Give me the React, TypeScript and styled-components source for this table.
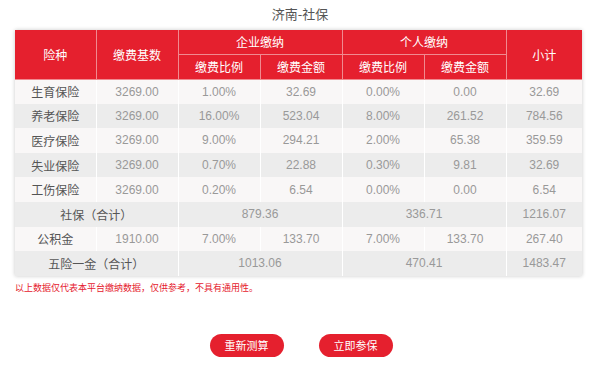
import React from 'react';
import styled, { createGlobalStyle } from 'styled-components';

type Row = {
  name: string;
  base?: string;
  cells: string[];
  total: string;
  merged?: boolean;
};

const rows: Row[] = [
  { name: '生育保险', base: '3269.00', cells: ['1.00%', '32.69', '0.00%', '0.00'], total: '32.69' },
  { name: '养老保险', base: '3269.00', cells: ['16.00%', '523.04', '8.00%', '261.52'], total: '784.56' },
  { name: '医疗保险', base: '3269.00', cells: ['9.00%', '294.21', '2.00%', '65.38'], total: '359.59' },
  { name: '失业保险', base: '3269.00', cells: ['0.70%', '22.88', '0.30%', '9.81'], total: '32.69' },
  { name: '工伤保险', base: '3269.00', cells: ['0.20%', '6.54', '0.00%', '0.00'], total: '6.54' },
  { name: '社保（合计）', cells: ['879.36', '336.71'], total: '1216.07', merged: true },
  { name: '公积金', base: '1910.00', cells: ['7.00%', '133.70', '7.00%', '133.70'], total: '267.40' },
  { name: '五险一金（合计）', cells: ['1013.06', '470.41'], total: '1483.47', merged: true },
];

const colWidths = [81, 82, 82, 82, 82, 82, 76];

const App: React.FC = () => {
  return (
    <>
      <GlobalStyle />
      <Page>
        <Title>济南-社保</Title>
        <Table>
          <colgroup>
            {colWidths.map((w, i) => (
              <col key={i} style={{ width: w }} />
            ))}
          </colgroup>
          <thead>
            <HeadRow $h={24}>
              <Th rowSpan={2}>险种</Th>
              <Th rowSpan={2}>缴费基数</Th>
              <Th colSpan={2}>企业缴纳</Th>
              <Th colSpan={2}>个人缴纳</Th>
              <Th rowSpan={2}>小计</Th>
            </HeadRow>
            <HeadRow $h={25}>
              <Th>缴费比例</Th>
              <Th>缴费金额</Th>
              <Th>缴费比例</Th>
              <Th>缴费金额</Th>
            </HeadRow>
          </thead>
          <tbody>
            {rows.map((r, i) => (
              <BodyRow key={r.name} $odd={i % 2 === 0}>
                {r.merged ? (
                  <>
                    <NameCell colSpan={2}>{r.name}</NameCell>
                    <Td colSpan={2}>{r.cells[0]}</Td>
                    <Td colSpan={2}>{r.cells[1]}</Td>
                  </>
                ) : (
                  <>
                    <NameCell>{r.name}</NameCell>
                    <Td>{r.base}</Td>
                    {r.cells.map((c, j) => (
                      <Td key={j}>{c}</Td>
                    ))}
                  </>
                )}
                <Td>{r.total}</Td>
              </BodyRow>
            ))}
          </tbody>
        </Table>
        <Note>以上数据仅代表本平台缴纳数据，仅供参考，不具有通用性。</Note>
        <Buttons>
          <RedButton>重新测算</RedButton>
          <RedButton>立即参保</RedButton>
        </Buttons>
      </Page>
    </>
  );
};

export default App;

const GlobalStyle = createGlobalStyle`
  body {
    margin: 0;
    background: #fff;
    font-family: "Liberation Sans", "Noto Sans CJK SC", sans-serif;
  }
`;

const Page = styled.div`
  width: 600px;
  padding-top: 5px;
`;

const Title = styled.div`
  text-align: center;
  font-family: "Noto Sans CJK SC", sans-serif;
  font-size: 13px;
  line-height: 17px;
  color: #555;
  margin-bottom: 8px;
`;

const Table = styled.table`
  width: 567px;
  margin: 0 auto 0 15px;
  border-collapse: collapse;
  table-layout: fixed;
  box-shadow: 0 0 4px rgba(0, 0, 0, 0.22);
`;

const HeadRow = styled.tr<{ $h: number }>`
  height: ${p => p.$h}px;
  background: #e5202e;
`;

const Th = styled.th`
  padding: 0;
  font-weight: normal;
  font-family: "Noto Sans CJK SC", sans-serif;
  font-size: 12px;
  color: #fff;
  border: 1px solid #f08a90;
  border-top: none;
  &:first-child { border-left: none; }
  &:last-child { border-right: none; }
`;

const BodyRow = styled.tr<{ $odd: boolean }>`
  height: 24.6px;
  background: ${p => (p.$odd ? '#f9f7f7' : '#ececec')};
`;

const Td = styled.td`
  padding: 0;
  text-align: center;
  font-size: 12px;
  color: #999;
  border: 1px solid #fff;
  border-top: none;
  border-bottom: none;
  &:last-child { border-right: none; }
`;

const NameCell = styled(Td)`
  font-family: "Noto Sans CJK SC", sans-serif;
  color: #555;
  border-left: none;
`;

const Note = styled.div`
  margin: 6px 0 0 15px;
  font-family: "Noto Sans CJK SC", sans-serif;
  font-size: 9px;
  line-height: 12px;
  color: #e5202e;
`;

const Buttons = styled.div`
  display: flex;
  justify-content: center;
  gap: 35px;
  margin-top: 40px;
  padding-left: 2px;
`;

const RedButton = styled.button`
  width: 74px;
  height: 23px;
  border: none;
  border-radius: 12px;
  background: #e5202e;
  color: #fff;
  font-family: "Noto Sans CJK SC", sans-serif;
  font-size: 11px;
  padding: 0;
  cursor: pointer;
`;
